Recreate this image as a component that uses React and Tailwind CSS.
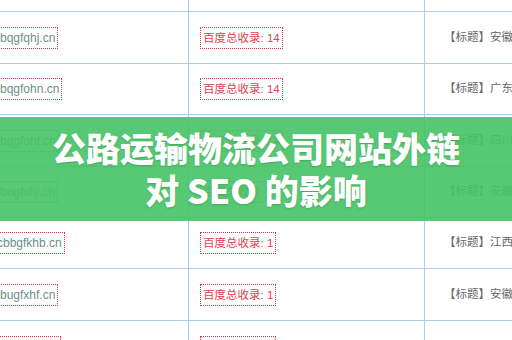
const rows = [
  { h: 'h-[52px]', site: 'bqgfqhj.cn', shift: '-ml-[4px]', count: '14', title: '【标题】安徽新能源汽车' },
  { h: 'h-[51px]', site: 'bqgfohn.cn', shift: '-ml-[4px]', count: '14', title: '【标题】广东汽车配件' },
  { h: 'h-[52px]', site: 'bqgfoht.cn', shift: '-ml-[4px]', count: '14', title: '【标题】四川天府物流' },
  { h: 'h-[51px]', site: 'bugfxhj.cn', shift: '-ml-[4px]', count: '1', title: '【标题】安徽服装加工' },
  { h: 'h-[51px]', site: 'cbbgfkhb.cn', shift: '-ml-[7px]', count: '1', title: '【标题】江西钢材市场' },
  { h: 'h-[52px]', site: 'bugfxhf.cn', shift: '-ml-[4px]', count: '1', title: '【标题】安徽钢结构' },
  { h: 'h-[52px]', site: 'bqgfxhk.cn', shift: '-ml-[4px]', count: '1', title: '' },
];

const Row = ({ row }) => (
  <div className={`grid grid-cols-[189px_236px_1fr] border-b border-[#a9cce8] ${row.h}`}>
    <div className="flex items-center overflow-hidden border-r border-[#a9cce8]">
      <span
        className={`${row.shift} whitespace-nowrap border border-dotted border-[#d8324a] pl-[3px] pr-[2px] text-[12px] leading-[18px] py-px text-[#6d8f8a]`}
      >
        {row.site}
      </span>
    </div>
    <div className="flex items-center overflow-hidden border-r border-[#a9cce8] pl-[11px]">
      <span className="whitespace-nowrap border border-dotted border-[#d8324a] px-[2px] py-px text-[11.5px] leading-[18px] text-[#e2414f]">
        百度总收录: {row.count}
      </span>
    </div>
    <div className="flex items-center overflow-hidden whitespace-nowrap pl-[19px] text-[11.5px] text-[#666]">
      {row.title}
    </div>
  </div>
);

export default function App() {
  return (
    <div className="relative h-[340px] w-[512px] overflow-hidden bg-white font-['Liberation_Sans','Noto_Sans_CJK_SC',sans-serif]">
      {/* table header strip */}
      <div className="grid h-[12px] grid-cols-[189px_236px_1fr] border-b border-[#a9cce8]">
        <div className="border-r border-[#a9cce8]" />
        <div className="border-r border-[#a9cce8]" />
        <div />
      </div>
      {rows.map((row) => (
        <Row key={row.site} row={row} />
      ))}

      {/* title banner over the table */}
      <div className="absolute left-0 right-0 top-[117px] flex h-[104px] flex-col items-center justify-center bg-[#45c365]/90 font-['Noto_Sans_CJK_SC',sans-serif] text-[34px] font-black leading-[42px] text-white [text-shadow:0_1px_2px_rgba(0,80,20,0.25)]">
        <div>公路运输物流公司网站外链</div>
        <div>对 SEO 的影响</div>
      </div>
    </div>
  );
}
